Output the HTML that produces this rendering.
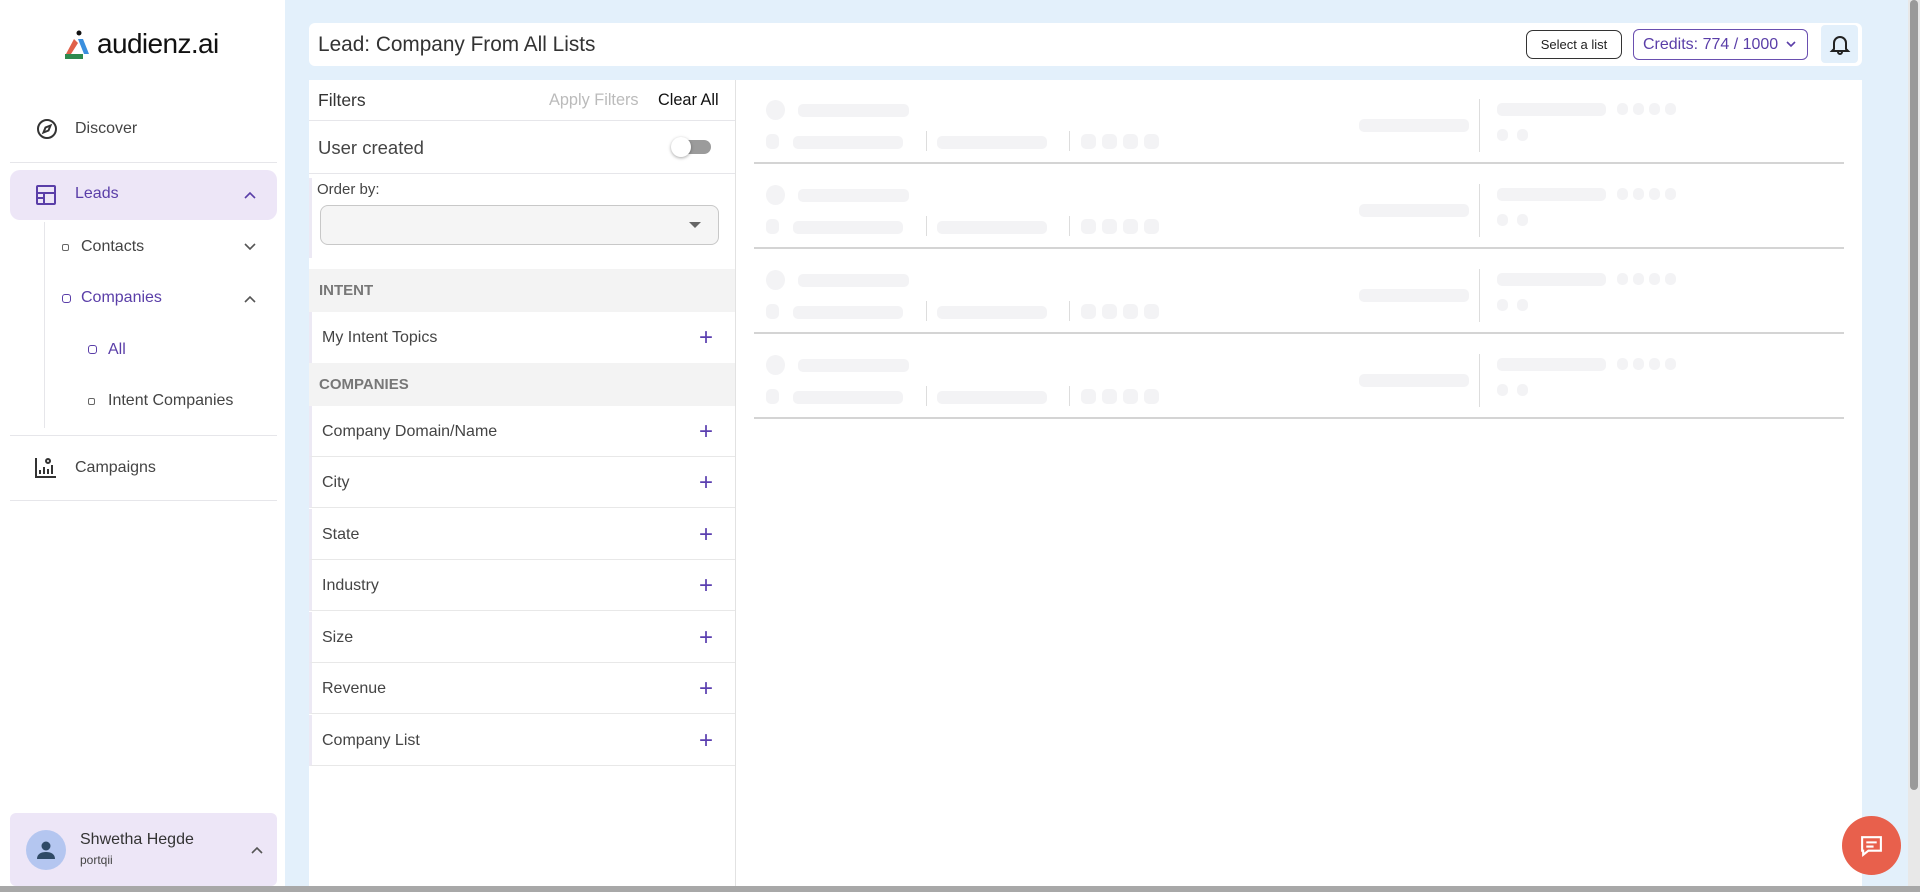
<!DOCTYPE html>
<html><head><meta charset="utf-8"><style>
*{box-sizing:border-box;margin:0;padding:0}
body{width:1920px;height:892px;overflow:hidden;background:#e3f0fb;font-family:"Liberation Sans",sans-serif;position:relative;color:#333}
.a{position:absolute}
.side{left:0;top:0;width:285px;height:892px;background:#fff}
.nav{font-size:16px;color:#444}
.hr{height:1px;background:#e6e6ea}
.sk{background:#f3f3f5;border-radius:5px}
.row{left:309px;width:426px;height:51px;border-bottom:1px solid #e8e8e8;border-left:3px solid #ece9f4;font-size:16px;color:#444;padding:0 0 0 10px;line-height:51px}
.row .p{position:absolute;right:22px;top:0;color:#5b3fb0;font-size:24px;font-weight:300}
.band{left:309px;width:426px;background:#f3f3f3;font-weight:bold;font-size:15px;color:#777;padding-left:10px}
</style></head><body>
<div class="a side">
  <svg class="a" style="left:64px;top:30px" width="28" height="30" viewBox="0 0 28 30"><circle cx="15" cy="3" r="2.5" fill="#111"/><path d="M2 24 L10 9 L14 13 L7 24Z" fill="#e0614a"/><path d="M14 9 L19 9 L25 24 L20 24Z" fill="#3a8fde"/><rect x="1" y="24" width="18" height="5" fill="#2e8a4e"/></svg>
  <div class="a" style="left:97px;top:28px;font-size:28px;color:#111;letter-spacing:-0.6px">audienz.ai</div>
  <svg class="a" style="left:36px;top:118px" width="22" height="22" viewBox="0 0 22 22" fill="none" stroke="#333" stroke-width="2"><circle cx="11" cy="11" r="9"/><path d="M14.5 7.5 L12.5 12.5 L7.5 14.5 L9.5 9.5Z"/></svg>
  <div class="a nav" style="left:75px;top:120px">Discover</div>
  <div class="a hr" style="left:10px;top:162px;width:267px"></div>
  <div class="a" style="left:10px;top:170px;width:267px;height:50px;background:#ede6f7;border-radius:10px"></div>
  <svg class="a" style="left:35px;top:184px" width="22" height="22" viewBox="0 0 22 22" fill="none" stroke="#5a3ea8" stroke-width="2"><rect x="2" y="2" width="18" height="18" rx="1"/><path d="M2 9h18M9 9v11M2 14h7"/></svg>
  <div class="a nav" style="left:75px;top:185px;color:#5a3ea8">Leads</div>
  <svg class="a" style="left:244px;top:191px" width="12" height="8" viewBox="0 0 12 8"><path d="M1 7l5-5 5 5" stroke="#5a3ea8" stroke-width="1.6" fill="none"/></svg>
  <div class="a" style="left:44px;top:222px;width:1px;height:206px;background:#e6e6ea"></div>
  <div class="a" style="left:62px;top:244px;width:7px;height:7px;border:1.5px solid #666;border-radius:2px"></div>
  <div class="a nav" style="left:81px;top:238px">Contacts</div>
  <svg class="a" style="left:244px;top:243px" width="12" height="8" viewBox="0 0 12 8"><path d="M1 1l5 5 5-5" stroke="#555" stroke-width="1.6" fill="none"/></svg>
  <div class="a" style="left:62px;top:294px;width:9px;height:9px;border:1.5px solid #5a3ea8;border-radius:3px"></div>
  <div class="a nav" style="left:81px;top:289px;color:#5a3ea8">Companies</div>
  <svg class="a" style="left:244px;top:295px" width="12" height="8" viewBox="0 0 12 8"><path d="M1 7l5-5 5 5" stroke="#555" stroke-width="1.6" fill="none"/></svg>
  <div class="a" style="left:88px;top:345px;width:9px;height:9px;border:1.5px solid #5a3ea8;border-radius:3px"></div>
  <div class="a nav" style="left:108px;top:341px;color:#5a3ea8">All</div>
  <div class="a" style="left:88px;top:398px;width:7px;height:7px;border:1.5px solid #666;border-radius:2px"></div>
  <div class="a nav" style="left:108px;top:392px">Intent Companies</div>
  <div class="a hr" style="left:10px;top:435px;width:267px"></div>
  <svg class="a" style="left:35px;top:456px" width="22" height="22" viewBox="0 0 22 22" fill="none" stroke="#333" stroke-width="2"><path d="M1 2v19h20M5 18v-4M9 18v-7M13 18v-5M17 18v-9"/><circle cx="13" cy="5" r="2"/></svg>
  <div class="a nav" style="left:75px;top:459px">Campaigns</div>
  <div class="a hr" style="left:10px;top:500px;width:267px"></div>
  <div class="a" style="left:10px;top:813px;width:267px;height:73px;background:#ede6f7;border-radius:6px"></div>
  <div class="a" style="left:26px;top:830px;width:40px;height:40px;border-radius:50%;background:#b4c6f0"></div>
  <svg class="a" style="left:34px;top:838px" width="24" height="24" viewBox="0 0 24 24"><circle cx="12" cy="8" r="4.5" fill="#2f4a66"/><path d="M3 21c0-5 4-7 9-7s9 2 9 7z" fill="#2f4a66"/></svg>
  <div class="a" style="left:80px;top:831px;font-size:16px;color:#333">Shwetha Hegde</div>
  <div class="a" style="left:80px;top:853px;font-size:12px;color:#444">portqii</div>
  <svg class="a" style="left:251px;top:846px" width="12" height="8" viewBox="0 0 12 8"><path d="M1 7l5-5 5 5" stroke="#555" stroke-width="1.6" fill="none"/></svg>
</div>

<div class="a" style="left:309px;top:23px;width:1553px;height:43px;background:#fff;border-radius:6px"></div>
<div class="a" style="left:318px;top:33px;font-size:20.8px;color:#333">Lead: Company From All Lists</div>
<div class="a" style="left:1526px;top:30px;width:96px;height:29px;border:1.3px solid #333;border-radius:7px;font-size:13px;line-height:27px;text-align:center;color:#222">Select a list</div>
<div class="a" style="left:1633px;top:29px;width:175px;height:31px;border:1.3px solid #6a4fb0;border-radius:6px;font-size:16px;line-height:29px;padding-left:9px;color:#5a3ea8">Credits: 774 / 1000</div>
<svg class="a" style="left:1786px;top:41px" width="10" height="7" viewBox="0 0 10 7"><path d="M1 1l4 4 4-4" stroke="#5a3ea8" stroke-width="1.6" fill="none"/></svg>
<div class="a" style="left:1821px;top:25px;width:37px;height:38px;background:#e3f0fb;border-radius:4px"></div>
<svg class="a" style="left:1829px;top:33px" width="22" height="22" viewBox="0 0 22 22" fill="none" stroke="#222" stroke-width="2"><path d="M5 16V10a6 6 0 0112 0v6l2 2H3z"/><path d="M9 19a2 2 0 004 0"/></svg>

<div class="a" style="left:309px;top:80px;width:1553px;height:806px;background:#fff"></div>
<div class="a" style="left:735px;top:80px;width:1px;height:806px;background:#e2e2e2"></div>
<div class="a" style="left:318px;top:90px;font-size:17.5px;color:#333">Filters</div>
<div class="a" style="left:549px;top:91px;font-size:16.3px;color:#bbb">Apply Filters</div>
<div class="a" style="left:658px;top:91px;font-size:16.3px;color:#111">Clear All</div>
<div class="a hr" style="left:309px;top:120px;width:426px"></div>
<div class="a" style="left:318px;top:137px;font-size:18.5px;color:#444">User created</div>
<div class="a" style="left:675px;top:140px;width:36px;height:14px;border-radius:7px;background:#9b9b9b"></div>
<div class="a" style="left:671px;top:137px;width:20px;height:20px;border-radius:50%;background:#fff;box-shadow:0 1px 3px rgba(0,0,0,.35)"></div>
<div class="a hr" style="left:309px;top:173px;width:426px"></div>
<div class="a" style="left:309px;top:178px;width:3px;height:80px;background:#ece9f4"></div>
<div class="a" style="left:317px;top:181px;font-size:15px;color:#444">Order by:</div>
<div class="a" style="left:320px;top:205px;width:399px;height:40px;border:1px solid #c8c8c8;border-radius:8px;background:#f5f5f5"></div>
<div class="a" style="left:689px;top:222px;border-left:6px solid transparent;border-right:6px solid transparent;border-top:6px solid #666"></div>
<div class="a band" style="top:269px;height:43px;line-height:43px">INTENT</div>
<div class="a row" style="top:312px;border-bottom:none">My Intent Topics<span class="p">+</span></div>
<div class="a band" style="top:363px;height:43px;line-height:43px">COMPANIES</div>
<div class="a row" style="top:406px">Company Domain/Name<span class="p">+</span></div>
<div class="a row" style="top:457px">City<span class="p">+</span></div>
<div class="a row" style="top:509px">State<span class="p">+</span></div>
<div class="a row" style="top:560px">Industry<span class="p">+</span></div>
<div class="a row" style="top:612px">Size<span class="p">+</span></div>
<div class="a row" style="top:663px">Revenue<span class="p">+</span></div>
<div class="a row" style="top:715px">Company List<span class="p">+</span></div>

<div id="sk"></div>
<script>
var h='';for(var i=0;i<4;i++){var o=i*85;
h+='<div class="a sk" style="left:766px;top:'+(100+o)+'px;width:19px;height:20px;border-radius:50%"></div>';
h+='<div class="a sk" style="left:798px;top:'+(104+o)+'px;width:111px;height:13px"></div>';
h+='<div class="a sk" style="left:766px;top:'+(134+o)+'px;width:13px;height:15px"></div>';
h+='<div class="a sk" style="left:793px;top:'+(136+o)+'px;width:110px;height:13px"></div>';
h+='<div class="a" style="left:926px;top:'+(131+o)+'px;width:1px;height:20px;background:#ddd"></div>';
h+='<div class="a sk" style="left:937px;top:'+(136+o)+'px;width:110px;height:13px"></div>';
h+='<div class="a" style="left:1069px;top:'+(131+o)+'px;width:1px;height:20px;background:#ddd"></div>';
for(var j=0;j<4;j++)h+='<div class="a sk" style="left:'+(1081+j*21)+'px;top:'+(134+o)+'px;width:15px;height:15px"></div>';
h+='<div class="a sk" style="left:1359px;top:'+(119+o)+'px;width:110px;height:13px"></div>';
h+='<div class="a" style="left:1479px;top:'+(99+o)+'px;width:1px;height:53px;background:#ddd"></div>';
h+='<div class="a sk" style="left:1497px;top:'+(103+o)+'px;width:109px;height:13px"></div>';
for(var j=0;j<4;j++)h+='<div class="a sk" style="left:'+(1617+j*16)+'px;top:'+(103+o)+'px;width:11px;height:12px"></div>';
for(var j=0;j<2;j++)h+='<div class="a sk" style="left:'+(1497+j*20)+'px;top:'+(129+o)+'px;width:11px;height:12px"></div>';
h+='<div class="a" style="left:754px;top:'+(162+o)+'px;width:1090px;height:1.5px;background:#d4d4d4"></div>';}
document.getElementById('sk').innerHTML=h;
</script>

<div class="a" style="left:1842px;top:816px;width:59px;height:59px;border-radius:50%;background:#e8604c"></div>
<svg class="a" style="left:1859px;top:833px" width="25" height="25" viewBox="0 0 24 24" fill="none" stroke="#fff" stroke-width="2"><path d="M3 4h18v13H9l-5 4v-4H3z"/><path d="M7 9h10M7 13h7"/></svg>
<div class="a" style="left:1908px;top:0;width:12px;height:892px;background:#e8e8e8"></div>
<div class="a" style="left:1910px;top:0;width:8px;height:790px;background:#9a9a9a;border-radius:4px"></div>
<div class="a" style="left:0;top:886px;width:1920px;height:6px;background:#a8a8a8"></div>
</body></html>
